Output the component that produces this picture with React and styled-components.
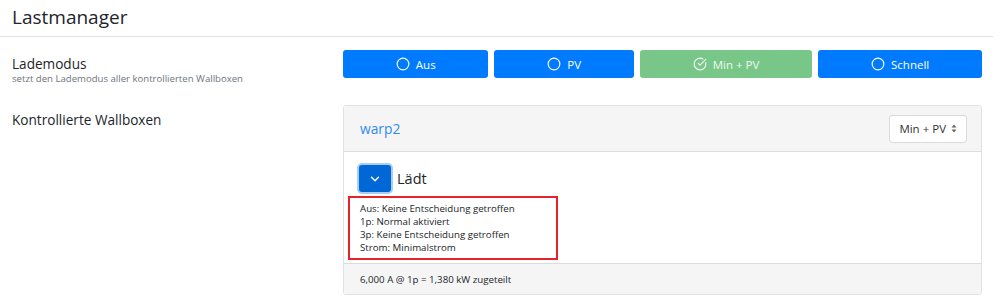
import React from "react";
import styled, { createGlobalStyle } from "styled-components";
import { Circle, CircleCheckBig, ChevronDown } from "lucide-react";

const GlobalStyle = createGlobalStyle`
  body {
    margin: 0;
    background: #fff;
    font-family: "Open Sans", "Noto Sans", sans-serif;
    color: #212529;
  }
`;

const Page = styled.div`
  width: 993px;
`;

const Title = styled.h1`
  margin: 0;
  padding: 4px 0 0 12px;
  height: 32px;
  font-size: 19px;
  font-weight: 400;
  border-bottom: 1px solid #e3e3e3;
`;

const Form = styled.div`
  display: grid;
  grid-template-columns: 331px 639px;
  row-gap: 20px;
  padding: 13px 0 0 12px;
`;

const Label = styled.div`
  padding-top: ${(p) => p.$top || 0}px;
  font-size: 13.6px;
  line-height: 18px;
`;

const Hint = styled.div`
  font-size: 9.6px;
  line-height: 12px;
  color: #6c757d;
`;

const ButtonGroup = styled.div`
  display: flex;
  gap: 6px;
  align-self: start;
`;

const ModeButton = styled.button`
  flex: 1 1 auto;
  height: 28px;
  display: flex;
  align-items: center;
  justify-content: center;
  gap: 6px;
  border: none;
  border-radius: 3px;
  font-family: inherit;
  font-size: 11.5px;
  background: ${(p) => (p.$active ? "#78c789" : "#007bff")};
  color: ${(p) => (p.$active ? "#eef8f0" : "#fff")};
  padding: 0 48px;
`;

const Card = styled.div`
  border: 1px solid #e2e2e2;
  border-radius: 3px;
  overflow: hidden;
`;

const CardHeader = styled.div`
  display: flex;
  align-items: center;
  justify-content: space-between;
  height: 45px;
  padding: 0 14px 0 16px;
  background: #f5f5f5;
  border-bottom: 1px solid #dcdcdc;
`;

const DeviceLink = styled.a`
  color: #2f8cf0;
  font-size: 13.8px;
  text-decoration: none;
`;

const Select = styled.div`
  display: flex;
  align-items: center;
  gap: 5px;
  height: 26px;
  padding: 0 9px;
  background: #fff;
  border: 1px solid #dadada;
  border-radius: 3px;
  font-size: 11.5px;
  color: #333;
`;

const CardBody = styled.div`
  padding: 13px 14px 3px 14px;
  background: #fff;
  border-bottom: 1px solid #dcdcdc;
`;

const StateRow = styled.div`
  display: flex;
  align-items: center;
  gap: 6px;
`;

const ToggleButton = styled.button`
  width: 32px;
  height: 27px;
  display: flex;
  align-items: center;
  justify-content: center;
  padding: 0;
  border: none;
  border-radius: 3px;
  background: #0068d6;
  box-shadow: 0 0 0 2px #a9cdf5;
  margin-left: 1px;
`;

const StateText = styled.span`
  font-size: 14.5px;
`;

const Details = styled.div`
  margin: 4px 0 0 -10px;
  width: 196px;
  padding: 4px 0 4px 10px;
  border: 2px solid #e4232b;
  font-size: 9.7px;
  line-height: 13px;
`;

const CardFooter = styled.div`
  height: 30px;
  display: flex;
  align-items: center;
  padding: 0 16px;
  background: #f5f5f5;
  font-size: 9.7px;
`;

const SelectArrows = () => (
  <svg width="6" height="9" viewBox="0 0 6 9">
    <path d="M3 0.5 L5.5 3.5 H0.5 Z" fill="#666" />
    <path d="M3 8.5 L5.5 5.5 H0.5 Z" fill="#666" />
  </svg>
);

const modes = ["Aus", "PV", "Min + PV", "Schnell"];

export default function App() {
  return (
    <Page>
      <GlobalStyle />
      <Title>Lastmanager</Title>
      <Form>
        <div>
          <Label $top={5}>Lademodus</Label>
          <Hint>setzt den Lademodus aller kontrollierten Wallboxen</Hint>
        </div>
        <ButtonGroup>
          {modes.map((m) => {
            const active = m === "Min + PV";
            return (
              <ModeButton key={m} $active={active}>
                {active ? (
                  <CircleCheckBig size={14} strokeWidth={2} />
                ) : (
                  <Circle size={14} strokeWidth={2} />
                )}
                {m}
              </ModeButton>
            );
          })}
        </ButtonGroup>
        <Label $top={6}>Kontrollierte Wallboxen</Label>
        <Card>
          <CardHeader>
            <DeviceLink href="#">warp2</DeviceLink>
            <Select>
              Min + PV <SelectArrows />
            </Select>
          </CardHeader>
          <CardBody>
            <StateRow>
              <ToggleButton>
                <ChevronDown size={14} color="#fff" strokeWidth={2.5} />
              </ToggleButton>
              <StateText>Lädt</StateText>
            </StateRow>
            <Details>
              <div>Aus: Keine Entscheidung getroffen</div>
              <div>1p: Normal aktiviert</div>
              <div>3p: Keine Entscheidung getroffen</div>
              <div>Strom: Minimalstrom</div>
            </Details>
          </CardBody>
          <CardFooter>6,000 A @ 1p = 1,380 kW zugeteilt</CardFooter>
        </Card>
      </Form>
    </Page>
  );
}
